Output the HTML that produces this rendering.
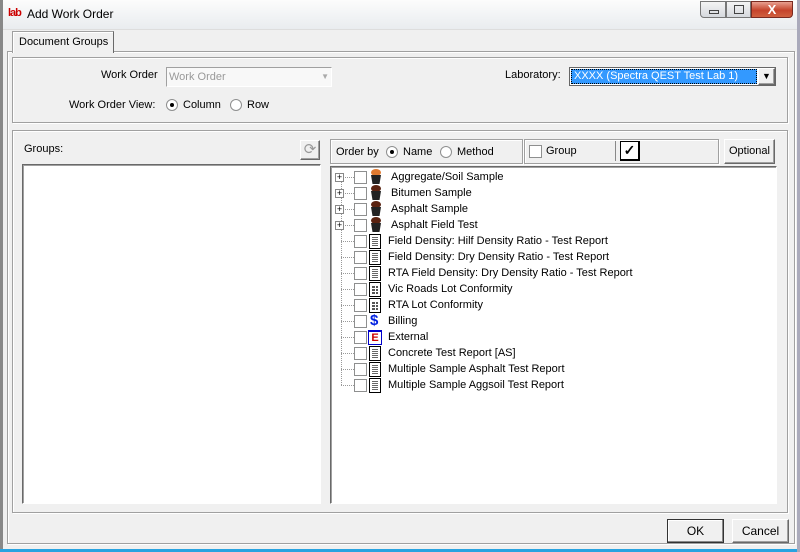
<!DOCTYPE html>
<html><head><style>
*{box-sizing:border-box;margin:0;padding:0}
body{width:800px;height:552px;position:relative;background:#f0f0f0;font-family:"Liberation Sans",sans-serif;font-size:11px;color:#000;overflow:hidden}
.a{position:absolute}
.sunk{border:1px solid #a0a0a0;border-right-color:#fff;border-bottom-color:#fff}
.grp{border:1px solid #a0a0a0;box-shadow:inset 1px 1px 0 #fff,1px 1px 0 #fff}
.btn{background:#f0f0f0;border:1px solid;border-color:#fff #696969 #696969 #fff;box-shadow:inset -1px -1px 0 #a0a0a0;text-align:center}
.cb{width:13px;height:13px;border:1px solid #8e8f8f;background:#fff;display:inline-block}
.rad{position:absolute;width:12px;height:12px;border-radius:50%;border:1px solid #8e8f8f;background:#fff}
.rad.on:after{content:"";position:absolute;left:3px;top:3px;width:4px;height:4px;border-radius:50%;background:#000}
.row{position:absolute;left:0;height:16px;width:440px}
.row .t{position:absolute;top:2px;font-size:11px}
.pl{position:absolute;left:4px;top:4px;width:9px;height:9px;border:1px solid #888;background:#fff;font-size:9px;line-height:7px;text-align:center}
.dot{position:absolute;border-top:1px dotted #999}
.ic{position:absolute;top:1px;left:38px;width:12px;height:15px}
.doc{border:1px solid #000;background:#fff}
.doc:after{content:"";position:absolute;left:2px;top:2px;right:2px;bottom:2px;background:repeating-linear-gradient(#666 0 1px,#fff 1px 2px)}
.grid{border:1px solid #000;background:#fff}
.grid:after{content:"";position:absolute;left:2px;top:2px;right:2px;bottom:2px;background:repeating-linear-gradient(#fff 0 1px,transparent 1px 3px),repeating-linear-gradient(90deg,#555 0 3px,#fff 3px 4px)}
.pot{position:absolute;top:0;left:39px;width:12px;height:16px}
.pot:before{content:"";position:absolute;left:1px;top:0;width:10px;height:7px;border-radius:50%;background:var(--c)}
.pot:after{content:"";position:absolute;left:1px;top:6px;width:10px;height:9px;background:#222;clip-path:polygon(0 0,100% 0,85% 100%,15% 100%)}
</style></head><body>
<div class="a" style="left:0;top:0;width:800px;height:30px;background:linear-gradient(#fcfcfc,#e9ecef);border-bottom:1px solid #ddd"></div>
<div class="a" style="left:8px;top:7px;font-size:11px;color:#c00;font-weight:bold;letter-spacing:-1px">lab</div>
<div class="a" style="left:27px;top:7px;font-size:12px">Add Work Order</div>
<div class="a" style="left:700px;top:1px;width:26px;height:17px;border:1px solid #777;border-radius:0 0 0 4px;background:linear-gradient(#f4f4f4,#d6d9de)"><div class="a" style="left:8px;top:8px;width:10px;height:4px;border:1px solid #444"></div></div>
<div class="a" style="left:726px;top:1px;width:25px;height:17px;border:1px solid #777;background:linear-gradient(#f4f4f4,#d6d9de)"><div class="a" style="left:7px;top:3px;width:10px;height:9px;border:1px solid #444"></div></div>
<div class="a" style="left:751px;top:1px;width:42px;height:17px;border:1px solid #7a2a20;border-radius:0 0 4px 0;background:linear-gradient(#e8a090,#c5442c 55%,#d06040);color:#fff;font-weight:bold;font-size:13px;text-align:center;line-height:15px">X</div>
<div class="a" style="left:0;top:0;width:3px;height:552px;background:#888"></div>
<div class="a" style="left:0;top:549px;width:800px;height:3px;background:#29a3e0"></div>
<div class="a" style="left:797px;top:0;width:3px;height:552px;background:#aab"></div>
<div class="a grp" style="left:7px;top:51px;width:788px;height:493px"></div>
<div class="a" style="left:12px;top:31px;width:102px;height:22px;background:#f0f0f0;border:1px solid #a0a0a0;border-bottom:none;border-right-color:#696969;box-shadow:inset 1px 1px 0 #fff"></div>
<div class="a" style="left:19px;top:36px">Document Groups</div>
<div class="a grp" style="left:12px;top:57px;width:776px;height:66px"></div>
<div class="a" style="left:101px;top:69px">Work Order</div>
<div class="a sunk" style="left:166px;top:67px;width:166px;height:20px;background:#f8f8f8;color:#999;padding:3px 2px">Work Order<span class="a" style="right:2px;top:4px;color:#aaa;font-size:8px">▼</span></div>
<div class="a" style="left:69px;top:99px">Work Order View:</div>
<span class="rad on" style="left:166px;top:99px"></span><div class="a" style="left:183px;top:99px">Column</div>
<span class="rad" style="left:230px;top:99px"></span><div class="a" style="left:247px;top:99px">Row</div>
<div class="a" style="left:505px;top:69px">Laboratory:</div>
<div class="a" style="left:569px;top:67px;width:207px;height:19px;border:1px solid #666;background:#fff"></div>
<div class="a" style="left:571px;top:69px;width:186px;height:15px;background:#3399ff;border:1px dotted #000;color:#fff;padding:0 2px;line-height:13px">XXXX (Spectra QEST Test Lab 1)</div>
<div class="a btn" style="left:758px;top:68px;width:17px;height:17px;font-size:9px;line-height:15px">▼</div>
<div class="a grp" style="left:12px;top:130px;width:776px;height:383px"></div>
<div class="a" style="left:24px;top:143px">Groups:</div>
<div class="a btn" style="left:300px;top:140px;width:20px;height:20px;color:#999;font-size:15px;line-height:17px">⟳</div>
<div class="a" style="left:22px;top:164px;width:299px;height:340px;background:#fff;border:1px solid;border-color:#696969 #fff #fff #696969;box-shadow:inset 1px 1px 0 #a0a0a0"></div>
<div class="a grp" style="left:330px;top:139px;width:193px;height:25px"></div>
<div class="a" style="left:336px;top:146px">Order by</div>
<span class="rad on" style="left:386px;top:146px"></span><div class="a" style="left:403px;top:146px">Name</div>
<span class="rad" style="left:440px;top:146px"></span><div class="a" style="left:457px;top:146px">Method</div>
<div class="a grp" style="left:524px;top:139px;width:195px;height:25px"></div>
<span class="a cb" style="left:529px;top:145px"></span><div class="a" style="left:546px;top:145px">Group</div>
<div class="a" style="left:615px;top:141px;width:1px;height:20px;background:#888"></div>
<div class="a" style="left:620px;top:141px;width:20px;height:20px;border:1px solid #000;border-right-width:2px;border-bottom-width:2px;background:#fff;font-size:14px;line-height:17px;text-align:center;font-weight:bold">✓</div>
<div class="a btn" style="left:724px;top:139px;width:51px;height:25px;line-height:23px;font-size:11px">Optional</div>
<div class="a" style="left:330px;top:166px;width:447px;height:338px;background:#fff;border:1px solid;border-color:#696969 #fff #fff #696969;box-shadow:inset 1px 1px 0 #a0a0a0">
<div class="dot" style="left:10px;top:10px;width:0;height:208px;border-top:none;border-left:1px dotted #999"></div>
<div class="row" style="top:2px"><div class="pl">+</div><div class="dot" style="left:14px;top:8px;width:9px"></div><span class="cb a" style="left:23px;top:2px"></span><div class="pot" style="--c:#e07a30"></div><span class="t" style="left:60px">Aggregate/Soil Sample</span></div>
<div class="row" style="top:18px"><div class="pl">+</div><div class="dot" style="left:14px;top:8px;width:9px"></div><span class="cb a" style="left:23px;top:2px"></span><div class="pot" style="--c:#5a2210"></div><span class="t" style="left:60px">Bitumen Sample</span></div>
<div class="row" style="top:34px"><div class="pl">+</div><div class="dot" style="left:14px;top:8px;width:9px"></div><span class="cb a" style="left:23px;top:2px"></span><div class="pot" style="--c:#5a2210"></div><span class="t" style="left:60px">Asphalt Sample</span></div>
<div class="row" style="top:50px"><div class="pl">+</div><div class="dot" style="left:14px;top:8px;width:9px"></div><span class="cb a" style="left:23px;top:2px"></span><div class="pot" style="--c:#5a2210"></div><span class="t" style="left:60px">Asphalt Field Test</span></div>
<div class="row" style="top:66px"><div class="dot" style="left:10px;top:8px;width:13px"></div><span class="cb a" style="left:23px;top:2px"></span><div class="ic doc"></div><span class="t" style="left:57px">Field Density: Hilf Density Ratio - Test Report</span></div>
<div class="row" style="top:82px"><div class="dot" style="left:10px;top:8px;width:13px"></div><span class="cb a" style="left:23px;top:2px"></span><div class="ic doc"></div><span class="t" style="left:57px">Field Density: Dry Density Ratio - Test Report</span></div>
<div class="row" style="top:98px"><div class="dot" style="left:10px;top:8px;width:13px"></div><span class="cb a" style="left:23px;top:2px"></span><div class="ic doc"></div><span class="t" style="left:57px">RTA Field Density: Dry Density Ratio - Test Report</span></div>
<div class="row" style="top:114px"><div class="dot" style="left:10px;top:8px;width:13px"></div><span class="cb a" style="left:23px;top:2px"></span><div class="ic grid"></div><span class="t" style="left:57px">Vic Roads Lot Conformity</span></div>
<div class="row" style="top:130px"><div class="dot" style="left:10px;top:8px;width:13px"></div><span class="cb a" style="left:23px;top:2px"></span><div class="ic grid"></div><span class="t" style="left:57px">RTA Lot Conformity</span></div>
<div class="row" style="top:146px"><div class="dot" style="left:10px;top:8px;width:13px"></div><span class="cb a" style="left:23px;top:2px"></span><div class="a" style="left:39px;top:-1px;color:#0020e0;font-weight:bold;font-size:15px">$</div><span class="t" style="left:57px">Billing</span></div>
<div class="row" style="top:162px"><div class="dot" style="left:10px;top:8px;width:13px"></div><span class="cb a" style="left:23px;top:2px"></span><div class="ic" style="left:37px;width:14px;border:1px solid #00c;border-top-width:2px;color:#c00;font-weight:bold;font-size:11px;line-height:12px;text-align:center;background:#fff">E</div><span class="t" style="left:57px">External</span></div>
<div class="row" style="top:178px"><div class="dot" style="left:10px;top:8px;width:13px"></div><span class="cb a" style="left:23px;top:2px"></span><div class="ic doc"></div><span class="t" style="left:57px">Concrete Test Report [AS]</span></div>
<div class="row" style="top:194px"><div class="dot" style="left:10px;top:8px;width:13px"></div><span class="cb a" style="left:23px;top:2px"></span><div class="ic doc"></div><span class="t" style="left:57px">Multiple Sample Asphalt Test Report</span></div>
<div class="row" style="top:210px"><div class="dot" style="left:10px;top:8px;width:13px"></div><span class="cb a" style="left:23px;top:2px"></span><div class="ic doc"></div><span class="t" style="left:57px">Multiple Sample Aggsoil Test Report</span></div>
</div>
<div class="a btn" style="left:667px;top:519px;width:57px;height:24px;line-height:22px;font-size:12px;border:1px solid #333;box-shadow:inset -1px -1px 0 #888,inset 1px 1px 0 #fff">OK</div>
<div class="a btn" style="left:732px;top:519px;width:57px;height:24px;line-height:22px;font-size:12px">Cancel</div>
</body></html>
